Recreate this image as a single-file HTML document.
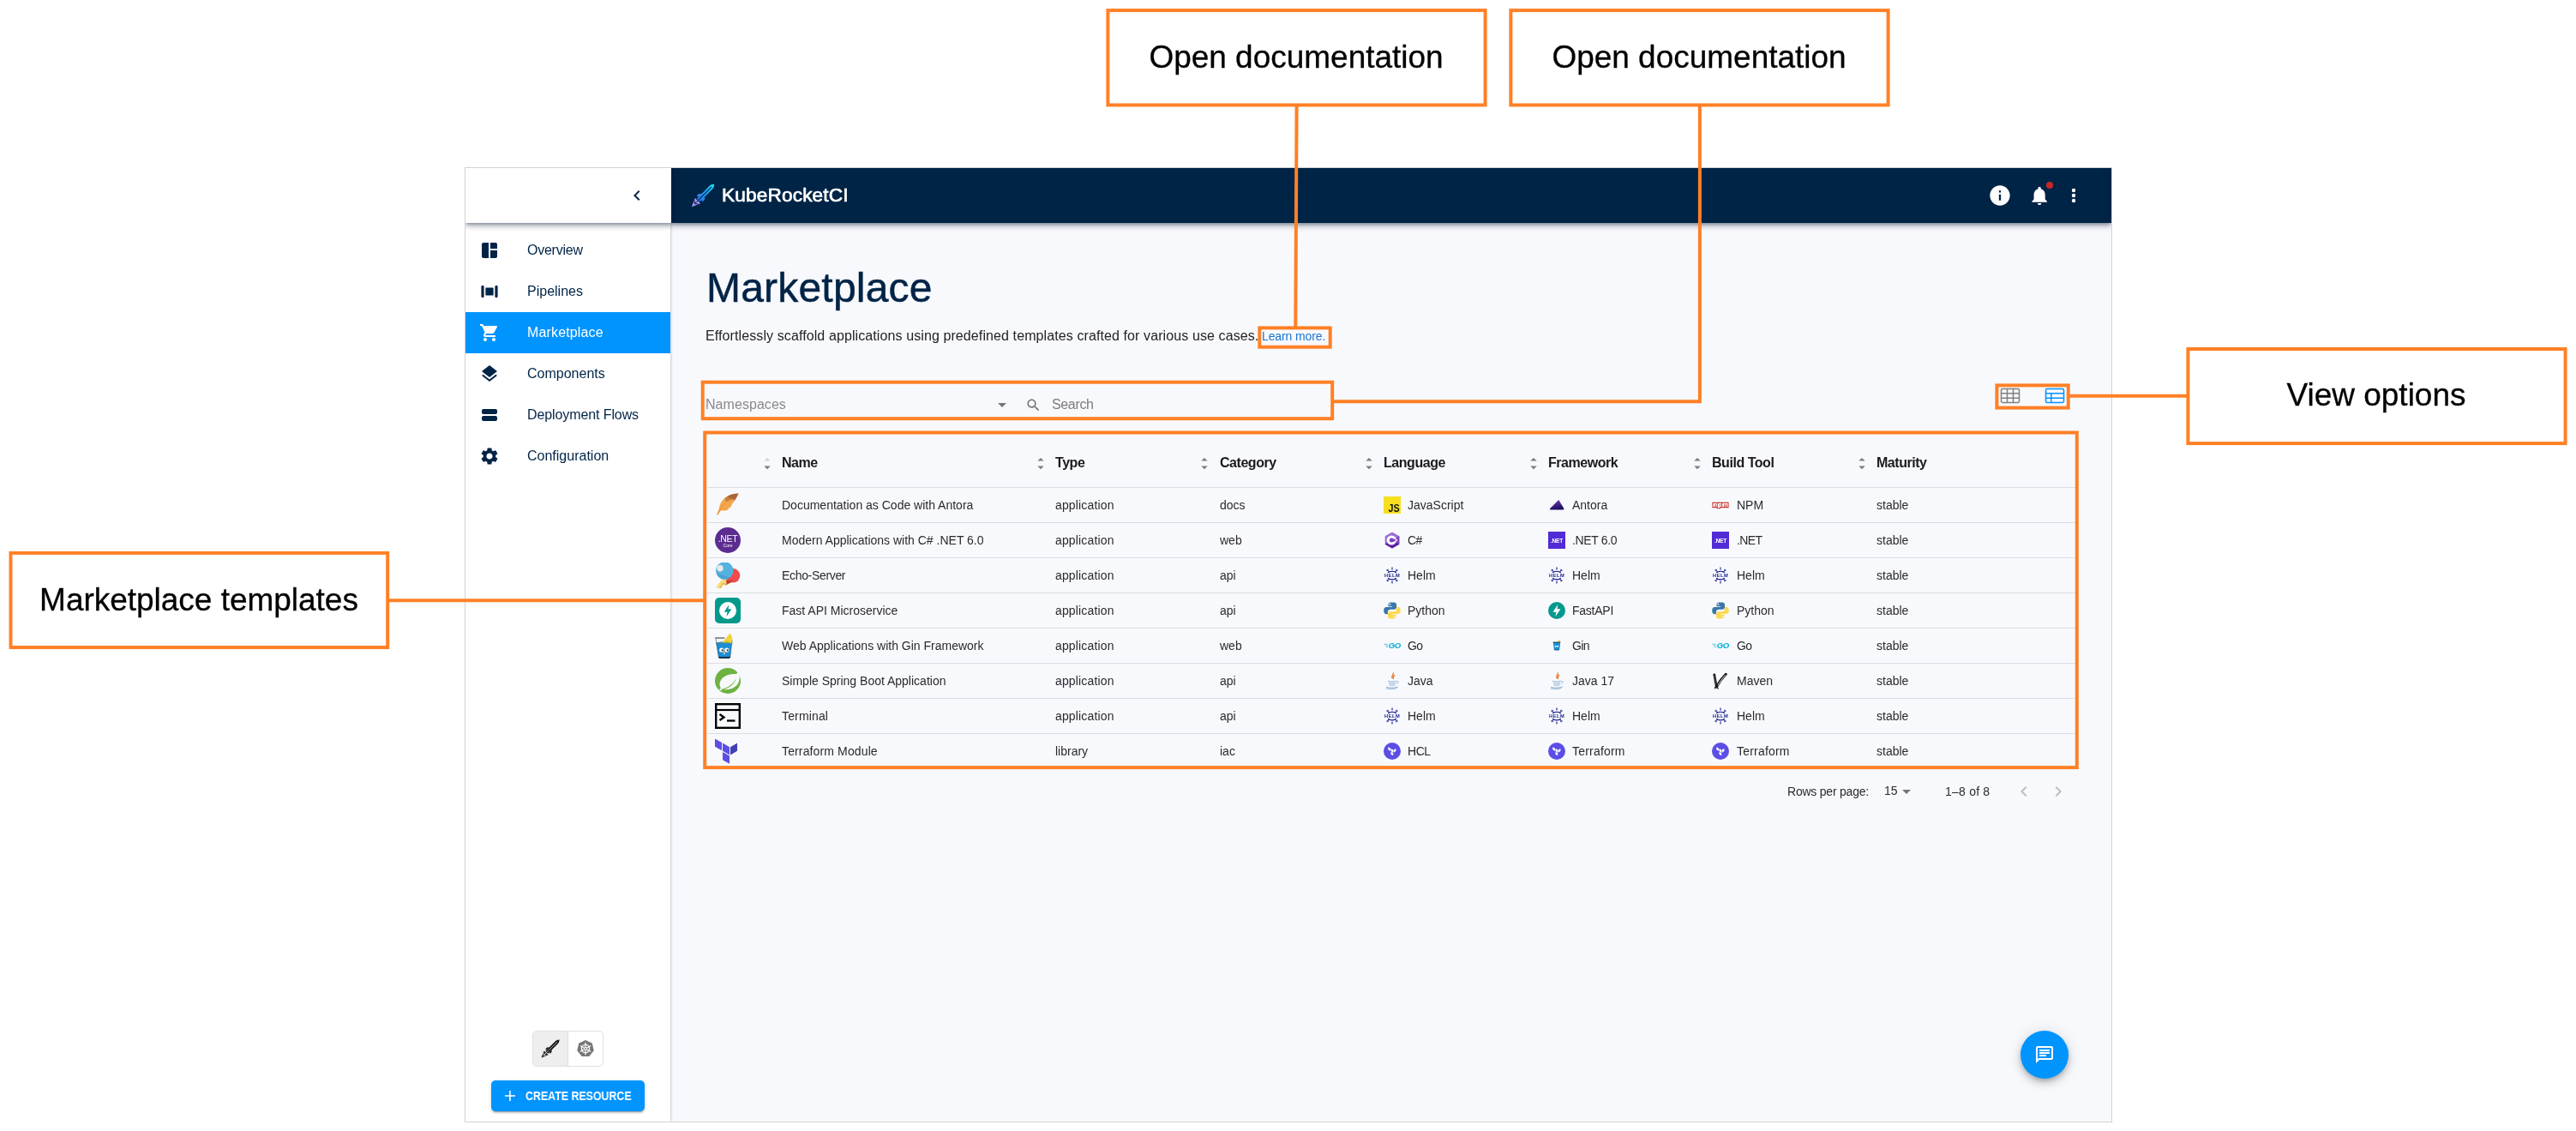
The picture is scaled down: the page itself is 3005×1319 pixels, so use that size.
<!DOCTYPE html>
<html lang="en">
<head>
<meta charset="utf-8">
<title>Marketplace</title>
<style>
html,body{margin:0;padding:0;}
body{width:3005px;height:1319px;position:relative;overflow:hidden;background:#fff;font-family:"Liberation Sans",sans-serif;color:#1c1c1c;}
.abs{position:absolute;}
.t{position:absolute;white-space:nowrap;line-height:1;}
.t,.cell,.hcell,.lbl,svg.abs{will-change:transform;}
#frame{position:absolute;left:542px;top:195px;width:1920px;height:1112px;border:1px solid #d2d2d2;background:#f8f9fd;}
#sidebar{position:absolute;left:543px;top:196px;width:239px;height:1112px;background:#fff;box-shadow:0.500px 0 2.500px rgba(10,20,60,.2);}
#sidehead{position:absolute;left:543px;top:196px;width:240px;height:64px;background:#fff;box-shadow:0 2px 4px -1px rgba(0,18,45,.38),0 4px 6px 0 rgba(0,18,45,.2),0 1px 11px 0 rgba(0,18,45,.14);}
#apphead{position:absolute;left:783px;top:196px;width:1680px;height:64px;background:#002446;box-shadow:0 2px 4px -1px rgba(0,18,45,.38),0 4px 6px 0 rgba(0,18,45,.2),0 1px 11px 0 rgba(0,18,45,.14);}
#clip{position:absolute;left:543px;top:196px;width:1920px;height:1112px;overflow:hidden;}
#clip>.in{position:absolute;left:-543px;top:-196px;width:3005px;height:1319px;}
.nav{position:absolute;left:543px;width:239px;height:48px;}
.nav.active{background:#0094ff;}
.nav .lbl{position:absolute;left:71.800px;top:16px;font-size:16px;line-height:16px;color:#002446;white-space:nowrap;}
.nav.active .lbl{color:#fff;}
.nav svg{position:absolute;left:16px;top:12px;width:24px;height:24px;fill:#002446;}
.nav.active svg{fill:#fff;}
.rowline{position:absolute;left:825px;width:1596px;height:1px;background:#dcdde2;}
.cell{position:absolute;white-space:nowrap;font-size:14px;line-height:14px;color:#2a2a2e;}
.hcell{position:absolute;white-space:nowrap;font-size:16px;line-height:16px;font-weight:700;color:#1a1a1e;letter-spacing:-0.460px;}
.ann{position:absolute;box-sizing:border-box;border:4px solid #ff8026;background:#fff;width:444px;height:114px;}
.ann span{position:absolute;left:0;right:0;text-align:center;font-size:36.8px;line-height:38px;color:#000;top:34px;white-space:nowrap;}
.annt{text-align:center;font-size:37px;line-height:37px;color:#000;letter-spacing:-0.020px;-webkit-text-stroke:0.300px #000;}
</style>
</head>
<body>
<div id="frame"></div>
<div id="clip"><div class="in">
<!-- MAIN -->
<div class="t" style="left:824px;top:312px;font-size:48px;line-height:48px;color:#002446;letter-spacing:0.200px;-webkit-text-stroke:0.500px #002446;">Marketplace</div>
<div class="t" style="left:823.300px;top:383.900px;font-size:16px;line-height:16px;color:#232326;letter-spacing:0.100px;">Effortlessly scaffold applications using predefined templates crafted for various use cases.</div>
<div class="t" style="left:1472.300px;top:385.200px;font-size:14px;line-height:14px;color:#1976d2;letter-spacing:-0.120px;">Learn more.</div>
<div class="t" style="left:823.200px;top:463.700px;font-size:16px;line-height:16px;color:#8a8a8d;letter-spacing:0.050px;">Namespaces</div>
<svg class="abs" style="left:1157px;top:460px;width:24px;height:24px" viewBox="0 0 24 24"><path d="M7 10l5 5 5-5z" fill="#757575"/></svg>
<svg class="abs" style="left:1196px;top:462.500px;width:19px;height:19px" viewBox="0 0 24 24"><path d="M15.500 14h-.79l-.28-.27C15.410 12.590 16 11.110 16 9.500 16 5.910 13.090 3 9.500 3S3 5.910 3 9.500 5.910 16 9.500 16c1.610 0 3.090-.59 4.230-1.570l.27.28v.79l5 4.990L20.490 19l-4.990-5zm-6 0C7.010 14 5 11.990 5 9.500S7.010 5 9.500 5 14 7.010 14 9.500 11.990 14 9.500 14z" fill="#757575"/></svg>
<div class="t" style="left:1226.500px;top:463.700px;font-size:16px;line-height:16px;color:#7a7a7d;letter-spacing:-0.350px;">Search</div>
<svg class="abs" style="left:2333px;top:452px;width:24px;height:19px" viewBox="0 0 24 19"><g fill="none" stroke="#808080" stroke-width="1.500"><rect x="1.500" y="1.500" width="21" height="16" rx="1.400"/><path d="M8.500 1.500v16M15.500 1.500v16M1.500 6.800h21M1.500 12.200h21"/></g></svg>
<svg class="abs" style="left:2385px;top:452px;width:24px;height:19px" viewBox="0 0 24 19"><g fill="none" stroke="#0094ff" stroke-width="1.500"><rect x="1.500" y="1.500" width="21" height="16" rx="1.400"/><path d="M7.800 6.800v10.700M1.500 6.800h21M1.500 12.200h21"/></g></svg>
<div class="hcell" style="left:912.0px;top:532px;">Name</div>
<svg class="abs" style="left:889.6px;top:531.500px;width:10px;height:17px" viewBox="0 0 10 17"><path d="M5 2L8.750 5.500H1.250z" fill="#d6d6da"/><path d="M5 15.300L8.750 11.500H1.250z" fill="#7c7c80"/></svg>
<div class="hcell" style="left:1231.2px;top:532px;">Type</div>
<svg class="abs" style="left:1208.8px;top:531.500px;width:10px;height:17px" viewBox="0 0 10 17"><path d="M5 2L8.750 5.500H1.250z" fill="#7c7c80"/><path d="M5 15.300L8.750 11.500H1.250z" fill="#7c7c80"/></svg>
<div class="hcell" style="left:1422.6px;top:532px;">Category</div>
<svg class="abs" style="left:1400.2px;top:531.500px;width:10px;height:17px" viewBox="0 0 10 17"><path d="M5 2L8.750 5.500H1.250z" fill="#7c7c80"/><path d="M5 15.300L8.750 11.500H1.250z" fill="#7c7c80"/></svg>
<div class="hcell" style="left:1614px;top:532px;">Language</div>
<svg class="abs" style="left:1591.6px;top:531.500px;width:10px;height:17px" viewBox="0 0 10 17"><path d="M5 2L8.750 5.500H1.250z" fill="#7c7c80"/><path d="M5 15.300L8.750 11.500H1.250z" fill="#7c7c80"/></svg>
<div class="hcell" style="left:1806px;top:532px;">Framework</div>
<svg class="abs" style="left:1783.6px;top:531.500px;width:10px;height:17px" viewBox="0 0 10 17"><path d="M5 2L8.750 5.500H1.250z" fill="#7c7c80"/><path d="M5 15.300L8.750 11.500H1.250z" fill="#7c7c80"/></svg>
<div class="hcell" style="left:1997.3px;top:532px;">Build Tool</div>
<svg class="abs" style="left:1974.9px;top:531.500px;width:10px;height:17px" viewBox="0 0 10 17"><path d="M5 2L8.750 5.500H1.250z" fill="#7c7c80"/><path d="M5 15.300L8.750 11.500H1.250z" fill="#7c7c80"/></svg>
<div class="hcell" style="left:2189.3px;top:532px;">Maturity</div>
<svg class="abs" style="left:2166.9px;top:531.500px;width:10px;height:17px" viewBox="0 0 10 17"><path d="M5 2L8.750 5.500H1.250z" fill="#7c7c80"/><path d="M5 15.300L8.750 11.500H1.250z" fill="#7c7c80"/></svg>
<div class="rowline" style="top:568.0px"></div>
<div class="rowline" style="top:609.0px"></div>
<div class="rowline" style="top:650.0px"></div>
<div class="rowline" style="top:691.0px"></div>
<div class="rowline" style="top:732.0px"></div>
<div class="rowline" style="top:773.0px"></div>
<div class="rowline" style="top:814.0px"></div>
<div class="rowline" style="top:855.0px"></div>
<svg class="abs" style="left:834px;top:573.5px;width:30px;height:30px" viewBox="0 0 30 30"><path d="M27.500 1.500C18 1.500 8.500 6 5.500 16c-1 3.500-1.500 6.500-3.300 10.200l1 .600C5 23.500 6.500 22 8 21c2.500 1.200 5.500.500 7.500-1 .300-1.500 1.800-2 3-2.700 1.300-1.600 1-3.300 2.500-4.800 2.500-2.800 4.500-6.500 6.500-11z" fill="#f3a64d"/><path d="M27.500 1.500c-4.500 0-9 1-12.800 3.200l3.300 4.300 4-1.300.5 2.300c2-2.500 3.700-5.500 5-8.500z" fill="#a8653a"/><path d="M14.700 4.700l3.300 4.300-4.500 2.500-2.300-3.800c1-1.200 2.200-2.200 3.500-3z" fill="#c57f45"/><path d="M3 26.500C6 19 11 12 20 6" stroke="#d98b3a" stroke-width="0.800" fill="none"/></svg>
<div class="cell" style="left:912.0px;top:581.80px;">Documentation as Code with Antora</div>
<div class="cell" style="left:1231.2px;top:581.80px;letter-spacing:0.150px;">application</div>
<div class="cell" style="left:1422.6px;top:581.80px;">docs</div>
<svg class="abs" style="left:1614px;top:578.5px;width:20px;height:20px" viewBox="0 0 20 20"><rect width="20" height="20" fill="#f7df1e"/><g transform="translate(12.200 18) scale(0.830 1)"><text x="0" y="0" font-family="Liberation Sans, sans-serif" font-size="13" font-weight="700" fill="#111" text-anchor="middle">JS</text></g></svg>
<div class="cell" style="left:1642.3px;top:581.80px;">JavaScript</div>
<svg class="abs" style="left:1806px;top:578.5px;width:20px;height:20px" viewBox="0 0 20 20"><defs><linearGradient id="ag" x1="0" y1="0" x2="0.300" y2="1"><stop offset="0" stop-color="#7a3fc0"/><stop offset="1" stop-color="#1d0e5e"/></linearGradient></defs><path d="M12.300 4l6 10c.4.700 0 1.500-.9 1.500H2.800c-.9 0-1.200-.8-.6-1.500z" fill="url(#ag)"/></svg>
<div class="cell" style="left:1834.3px;top:581.80px;">Antora</div>
<svg class="abs" style="left:1997.3px;top:578.5px;width:20px;height:20px" viewBox="0 0 20 20"><path d="M0.400 6.800h19.200v6.400H10v1.100H5.700v-1.100H0.400z" fill="#cb3837"/><path d="M1.500 7.900v4.200h2.100V9h1.100v3.100h1.100V7.900zM6.800 7.900v5.300H9v-1.100h2.100V7.900zm2.200 1.100h1v2.100H9zM12.200 7.900v4.200h2.100V9h1.100v3.100h1.100V9h1v3.100h1.100V7.900z" fill="#fff"/></svg>
<div class="cell" style="left:2025.6px;top:581.80px;">NPM</div>
<div class="cell" style="left:2189.3px;top:581.80px;">stable</div>
<svg class="abs" style="left:834px;top:614.5px;width:30px;height:30px" viewBox="0 0 30 30"><circle cx="15" cy="15" r="15" fill="#5c2d91"/><text x="15" y="17" font-family="Liberation Sans, sans-serif" font-size="10.500" fill="#fff" text-anchor="middle" letter-spacing="-0.300">.NET</text><text x="15" y="23.300" font-family="Liberation Sans, sans-serif" font-size="5" fill="#fff" text-anchor="middle">Core</text></svg>
<div class="cell" style="left:912.0px;top:622.80px;">Modern Applications with C# .NET 6.0</div>
<div class="cell" style="left:1231.2px;top:622.80px;letter-spacing:0.150px;">application</div>
<div class="cell" style="left:1422.6px;top:622.80px;">web</div>
<svg class="abs" style="left:1614px;top:619.5px;width:20px;height:20px" viewBox="0 0 20 20"><path d="M10 0.500l8.300 4.750v9.500L10 19.500l-8.300-4.750v-9.500z" fill="#9b6fd6"/><path d="M1.700 14.750L10 19.500l8.300-4.750L10 10z" fill="#5a1fa3"/><path d="M18.300 5.250v9.500L10 10z" fill="#7a3fc0"/><circle cx="9.300" cy="10" r="5.600" fill="#fff"/><circle cx="9.300" cy="10" r="2.500" fill="#7a3fc0"/><path d="M11 8.200l7 1.800-7 1.800z" fill="#7a3fc0"/><path d="M14.300 8.600v2.800M15.600 8.600v2.800M13.600 9.500h2.700M13.600 10.500h2.700" stroke="#fff" stroke-width="0.500"/></svg>
<div class="cell" style="left:1642.3px;top:622.80px;letter-spacing:-0.500px;">C#</div>
<svg class="abs" style="left:1806px;top:619.5px;width:20px;height:20px" viewBox="0 0 20 20"><rect width="20" height="20" fill="#512bd4"/><text x="10" y="12.500" font-family="Liberation Sans, sans-serif" font-size="6.600" font-weight="700" fill="#fff" text-anchor="middle" letter-spacing="-0.200">.NET</text></svg>
<div class="cell" style="left:1834.3px;top:622.80px;letter-spacing:-0.350px;">.NET 6.0</div>
<svg class="abs" style="left:1997.3px;top:619.5px;width:20px;height:20px" viewBox="0 0 20 20"><rect width="20" height="20" fill="#512bd4"/><text x="10" y="12.500" font-family="Liberation Sans, sans-serif" font-size="6.600" font-weight="700" fill="#fff" text-anchor="middle" letter-spacing="-0.200">.NET</text></svg>
<div class="cell" style="left:2025.6px;top:622.80px;letter-spacing:-0.600px;">.NET</div>
<div class="cell" style="left:2189.3px;top:622.80px;">stable</div>
<svg class="abs" style="left:834px;top:655.5px;width:30px;height:30px" viewBox="0 0 30 30"><circle cx="21" cy="15.300" r="8.300" fill="#ef4b4b"/><path d="M10 17.500l8 6-4.500 3.300-3.800-1.600-3 4.500c-1 1.300-2.600 1.400-3.700.400-1-.900-1.100-2.400-.200-3.500z" fill="#f7dc7d"/><path d="M18 23.500l-4.500 3.300-3.800-1.600-3 4.500c-1 1.300-2.600 1.400-3.700.400l-.3-.4c1.100.7 2.400.4 3.200-.6l3.400-5.300 4.200 1.500 3.500-2.600z" fill="#e7a63c"/><path d="M13 19.500c2.500 1.500 5.500 2 8 1.200l-3 3-4.500 1.500z" fill="#c53a3a"/><circle cx="11.300" cy="9.500" r="10.200" fill="#55b1e0"/><path d="M1.500 12.500c1.500 4 5 7.200 9.800 7.200 2.500 0 4.700-.8 6.400-2.200l-7-2.500z" fill="#3f97cc" opacity=".55"/><circle cx="6" cy="6.800" r="3.700" fill="#e9e9e9"/></svg>
<div class="cell" style="left:912.0px;top:663.80px;letter-spacing:-0.330px;">Echo-Server</div>
<div class="cell" style="left:1231.2px;top:663.80px;letter-spacing:0.150px;">application</div>
<div class="cell" style="left:1422.6px;top:663.80px;">api</div>
<svg class="abs" style="left:1614px;top:660.5px;width:20px;height:20px" viewBox="0 0 20 20"><path d="M10 0.600v2.900" transform="rotate(0 10 10)" stroke="#0f1689" stroke-width="1.100"/><path d="M10 0.600v2.900" transform="rotate(180 10 10)" stroke="#0f1689" stroke-width="1.100"/><path d="M10 2.400v2.700M8.900 1.200L10 2.500L11.100 1.200" transform="rotate(-41 10 10)" stroke="#0f1689" stroke-width="0.950" fill="none"/><path d="M10 2.400v2.700M8.900 1.200L10 2.500L11.100 1.200" transform="rotate(41 10 10)" stroke="#0f1689" stroke-width="0.950" fill="none"/><path d="M10 2.400v2.700M8.900 1.200L10 2.500L11.100 1.200" transform="rotate(139 10 10)" stroke="#0f1689" stroke-width="0.950" fill="none"/><path d="M10 2.400v2.700M8.900 1.200L10 2.500L11.100 1.200" transform="rotate(221 10 10)" stroke="#0f1689" stroke-width="0.950" fill="none"/><path d="M5 6.900c2.800-2.300 7.200-2.300 10 0" stroke="#0f1689" stroke-width="1.100" fill="none"/><path d="M5 13.100c2.800 2.300 7.200 2.300 10 0" stroke="#0f1689" stroke-width="1.100" fill="none"/><text x="10.200" y="12.050" font-family="Liberation Sans, sans-serif" font-size="5.700" font-weight="700" fill="#0f1689" text-anchor="middle" letter-spacing="0.550">HELM</text></svg>
<div class="cell" style="left:1642.3px;top:663.80px;">Helm</div>
<svg class="abs" style="left:1806px;top:660.5px;width:20px;height:20px" viewBox="0 0 20 20"><path d="M10 0.600v2.900" transform="rotate(0 10 10)" stroke="#0f1689" stroke-width="1.100"/><path d="M10 0.600v2.900" transform="rotate(180 10 10)" stroke="#0f1689" stroke-width="1.100"/><path d="M10 2.400v2.700M8.900 1.200L10 2.500L11.100 1.200" transform="rotate(-41 10 10)" stroke="#0f1689" stroke-width="0.950" fill="none"/><path d="M10 2.400v2.700M8.900 1.200L10 2.500L11.100 1.200" transform="rotate(41 10 10)" stroke="#0f1689" stroke-width="0.950" fill="none"/><path d="M10 2.400v2.700M8.900 1.200L10 2.500L11.100 1.200" transform="rotate(139 10 10)" stroke="#0f1689" stroke-width="0.950" fill="none"/><path d="M10 2.400v2.700M8.900 1.200L10 2.500L11.100 1.200" transform="rotate(221 10 10)" stroke="#0f1689" stroke-width="0.950" fill="none"/><path d="M5 6.900c2.800-2.300 7.200-2.300 10 0" stroke="#0f1689" stroke-width="1.100" fill="none"/><path d="M5 13.100c2.800 2.300 7.200 2.300 10 0" stroke="#0f1689" stroke-width="1.100" fill="none"/><text x="10.200" y="12.050" font-family="Liberation Sans, sans-serif" font-size="5.700" font-weight="700" fill="#0f1689" text-anchor="middle" letter-spacing="0.550">HELM</text></svg>
<div class="cell" style="left:1834.3px;top:663.80px;">Helm</div>
<svg class="abs" style="left:1997.3px;top:660.5px;width:20px;height:20px" viewBox="0 0 20 20"><path d="M10 0.600v2.900" transform="rotate(0 10 10)" stroke="#0f1689" stroke-width="1.100"/><path d="M10 0.600v2.900" transform="rotate(180 10 10)" stroke="#0f1689" stroke-width="1.100"/><path d="M10 2.400v2.700M8.900 1.200L10 2.500L11.100 1.200" transform="rotate(-41 10 10)" stroke="#0f1689" stroke-width="0.950" fill="none"/><path d="M10 2.400v2.700M8.900 1.200L10 2.500L11.100 1.200" transform="rotate(41 10 10)" stroke="#0f1689" stroke-width="0.950" fill="none"/><path d="M10 2.400v2.700M8.900 1.200L10 2.500L11.100 1.200" transform="rotate(139 10 10)" stroke="#0f1689" stroke-width="0.950" fill="none"/><path d="M10 2.400v2.700M8.900 1.200L10 2.500L11.100 1.200" transform="rotate(221 10 10)" stroke="#0f1689" stroke-width="0.950" fill="none"/><path d="M5 6.900c2.800-2.300 7.200-2.300 10 0" stroke="#0f1689" stroke-width="1.100" fill="none"/><path d="M5 13.100c2.800 2.300 7.200 2.300 10 0" stroke="#0f1689" stroke-width="1.100" fill="none"/><text x="10.200" y="12.050" font-family="Liberation Sans, sans-serif" font-size="5.700" font-weight="700" fill="#0f1689" text-anchor="middle" letter-spacing="0.550">HELM</text></svg>
<div class="cell" style="left:2025.6px;top:663.80px;">Helm</div>
<div class="cell" style="left:2189.3px;top:663.80px;">stable</div>
<svg class="abs" style="left:834px;top:696.5px;width:30px;height:30px" viewBox="0 0 30 30"><rect width="30" height="30" rx="5" fill="#05998b"/><circle cx="15" cy="15" r="10" fill="#fff"/><path d="M16.300 8l-5.500 8.700h3.700l-1 5.500 5.800-8.900h-3.800z" fill="#05998b"/></svg>
<div class="cell" style="left:912.0px;top:704.80px;">Fast API Microservice</div>
<div class="cell" style="left:1231.2px;top:704.80px;letter-spacing:0.150px;">application</div>
<div class="cell" style="left:1422.6px;top:704.80px;">api</div>
<svg class="abs" style="left:1614px;top:701.5px;width:20px;height:20px" viewBox="0 0 20 20"><path d="M9.900 0.500c-2.600 0-4.400.6-4.400 2.400v2.300h4.600v.7H3.300C1.400 5.900.2 7.400.2 10c0 2.700 1.100 4.200 3 4.200h1.700v-2.400c0-1.800 1.500-3.100 3.200-3.100h4.300c1.500 0 2.600-1.200 2.600-2.700V2.900c0-1.500-1.300-2.400-2.700-2.400z" fill="#3a76a8"/><circle cx="7.400" cy="2.700" r=".9" fill="#fff"/><path d="M10.100 19.500c2.600 0 4.400-.6 4.400-2.400v-2.300H9.900v-.7h6.800c1.900 0 3.100-1.500 3.100-4.100 0-2.700-1.100-4.200-3-4.200h-1.700v2.400c0 1.800-1.500 3.100-3.200 3.100H7.600c-1.500 0-2.600 1.200-2.600 2.700v3.100c0 1.500 1.300 2.400 2.700 2.400z" fill="#fbd94f"/><circle cx="12.600" cy="17.300" r=".9" fill="#fff"/></svg>
<div class="cell" style="left:1642.3px;top:704.80px;">Python</div>
<svg class="abs" style="left:1806px;top:701.5px;width:20px;height:20px" viewBox="0 0 20 20"><circle cx="10" cy="10" r="10" fill="#05998b"/><path d="M11.300 3l-5.800 8.700h3.900l-1 5.300 6.100-8.800h-4z" fill="#fff"/></svg>
<div class="cell" style="left:1834.3px;top:704.80px;letter-spacing:-0.250px;">FastAPI</div>
<svg class="abs" style="left:1997.3px;top:701.5px;width:20px;height:20px" viewBox="0 0 20 20"><path d="M9.900 0.500c-2.600 0-4.400.6-4.400 2.400v2.300h4.600v.7H3.300C1.400 5.900.2 7.400.2 10c0 2.700 1.100 4.200 3 4.200h1.700v-2.400c0-1.800 1.500-3.100 3.200-3.100h4.300c1.500 0 2.600-1.200 2.600-2.700V2.900c0-1.500-1.300-2.400-2.700-2.400z" fill="#3a76a8"/><circle cx="7.400" cy="2.700" r=".9" fill="#fff"/><path d="M10.100 19.500c2.600 0 4.400-.6 4.400-2.400v-2.300H9.900v-.7h6.800c1.900 0 3.100-1.500 3.100-4.100 0-2.700-1.100-4.200-3-4.200h-1.700v2.400c0 1.800-1.500 3.100-3.200 3.100H7.600c-1.500 0-2.600 1.200-2.600 2.700v3.100c0 1.500 1.300 2.400 2.700 2.400z" fill="#fbd94f"/><circle cx="12.600" cy="17.300" r=".9" fill="#fff"/></svg>
<div class="cell" style="left:2025.6px;top:704.80px;">Python</div>
<div class="cell" style="left:2189.3px;top:704.80px;">stable</div>
<svg class="abs" style="left:834px;top:737.5px;width:30px;height:30px" viewBox="0 0 30 30"><path d="M0.800 6h19.400l-2.400 22.500c-.1.800-.7 1.200-1.500 1.200H5.800c-.8 0-1.400-.4-1.500-1.200z" fill="#eef3f7"/><path d="M1.500 11.500c6-1.300 12-1.300 18 0l-1.700 17c-.1.800-.7 1.200-1.500 1.200H5.800c-.8 0-1.400-.4-1.500-1.200z" fill="#1a8fd6"/><path d="M1.500 11.500c6-1.300 12-1.300 18 0l-.3 2.500c-6-1.200-11.500-1.200-17.400 0z" fill="#3a8a9e" opacity=".6"/><path d="M8.500 11.500l9-11c2.300 2.300 3.300 6 2.700 9.500l-1 1.800c-3.500-.7-7-.8-10.700-.3z" fill="#f5d33a"/><path d="M8.500 11.500l6-2.500 4 2.500c-3.300-.5-6.700-.5-10 0z" fill="#e0b820"/><path d="M0.300 5.600h11v1h-11z" fill="#333"/><path d="M3.800 28l.4.800c.2.600.8.900 1.600.9h10.500c.8 0 1.400-.3 1.500-.9l.3-.8z" fill="#123"/><path d="M0.800 6l3.500 22.500" stroke="#234" stroke-width=".5"/><path d="M20.200 9l-2.400 19.500" stroke="#234" stroke-width=".5"/><circle cx="7.800" cy="20" r="2.600" fill="#fff"/><circle cx="13.800" cy="20" r="2.600" fill="#fff"/><circle cx="8.700" cy="20.300" r="1.100" fill="#222"/><circle cx="14.700" cy="20.300" r="1.100" fill="#222"/><ellipse cx="10.900" cy="22.800" rx="1.500" ry="1" fill="#c79a6a"/><rect x="10.300" y="23.500" width="1.300" height="1.600" fill="#fff"/></svg>
<div class="cell" style="left:912.0px;top:745.80px;">Web Applications with Gin Framework</div>
<div class="cell" style="left:1231.2px;top:745.80px;letter-spacing:0.150px;">application</div>
<div class="cell" style="left:1422.6px;top:745.80px;">web</div>
<svg class="abs" style="left:1614px;top:742.5px;width:20px;height:20px" viewBox="0 0 20 20"><path d="M0.200 8.300h4.600M1.600 9.900h3.400M3 11.500h2" stroke="#3ab6d8" stroke-width="0.700"/><text x="12.800" y="13.300" font-family="Liberation Sans, sans-serif" font-size="9.600" font-weight="700" font-style="italic" fill="#00acd7" text-anchor="middle" letter-spacing="-0.500">GO</text></svg>
<div class="cell" style="left:1642.3px;top:745.80px;letter-spacing:-0.700px;">Go</div>
<svg class="abs" style="left:1806px;top:742.5px;width:20px;height:20px" viewBox="0 0 20 20"><path d="M10.500 6.500l2.300-3.700c1 .9 1.400 2.300 1.100 3.700z" fill="#f5d33a"/><path d="M5.800 6h8.400l-1 8.600c-.1.500-.4.700-.8.700H7.600c-.4 0-.7-.2-.8-.7z" fill="#1a8fd6"/><path d="M5.600 5.600h8.800v.9H5.600z" fill="#234"/><circle cx="8.700" cy="10.800" r="1" fill="#fff"/><circle cx="11.200" cy="10.800" r="1" fill="#fff"/><path d="M7 14.700h6l-.2.600H7.200z" fill="#123"/></svg>
<div class="cell" style="left:1834.3px;top:745.80px;letter-spacing:-0.600px;">Gin</div>
<svg class="abs" style="left:1997.3px;top:742.5px;width:20px;height:20px" viewBox="0 0 20 20"><path d="M0.200 8.300h4.600M1.600 9.900h3.400M3 11.500h2" stroke="#3ab6d8" stroke-width="0.700"/><text x="12.800" y="13.300" font-family="Liberation Sans, sans-serif" font-size="9.600" font-weight="700" font-style="italic" fill="#00acd7" text-anchor="middle" letter-spacing="-0.500">GO</text></svg>
<div class="cell" style="left:2025.6px;top:745.80px;letter-spacing:-0.700px;">Go</div>
<div class="cell" style="left:2189.3px;top:745.80px;">stable</div>
<svg class="abs" style="left:834px;top:778.5px;width:30px;height:30px" viewBox="0 0 30 30"><circle cx="15" cy="15" r="15" fill="#6db33f"/><path d="M27.500 3c-.6 1.500-1.500 2.900-2.500 4C13 6 5.500 12.500 5.500 19c0 2 .8 4 2 5.200l.7.600c7.500 1.800 19-1 20.500-12 .5-3.500-.2-7-1.200-9.800z" fill="#f8f9fd"/><path d="M8.500 24.500c5-1 12-4.500 16.500-12.500-2.500 7.500-9 12-16 13.500z" fill="#6db33f"/><circle cx="6.700" cy="25" r="1.300" fill="#f8f9fd"/></svg>
<div class="cell" style="left:912.0px;top:786.80px;">Simple Spring Boot Application</div>
<div class="cell" style="left:1231.2px;top:786.80px;letter-spacing:0.150px;">application</div>
<div class="cell" style="left:1422.6px;top:786.80px;">api</div>
<svg class="abs" style="left:1614px;top:783.5px;width:20px;height:20px" viewBox="0 0 20 20"><path d="M11 0.500c1.900 2.100-2.800 3.400-1 6.500M13.200 3.200c-3.400 1.700-1.500 3.300-1.900 5" stroke="#ea6a1a" stroke-width="1.250" fill="none"/><path d="M5 10.300c3 .9 7 .9 10 0M6 12.600c2.500.7 5.500.7 8 0M6.500 14.800c2.300.6 4.700.6 7 0M3 17.200c4.300 1.300 9.700 1.300 14-.3M2.800 18.900c4 .8 9 .8 12.500-.3" stroke="#5a8dbb" stroke-width="0.650" fill="none"/><path d="M15.300 10.600c2.400-.7 2.600 1.800-.4 3" stroke="#5a8dbb" stroke-width="0.600" fill="none"/></svg>
<div class="cell" style="left:1642.3px;top:786.80px;">Java</div>
<svg class="abs" style="left:1806px;top:783.5px;width:20px;height:20px" viewBox="0 0 20 20"><path d="M11 0.500c1.900 2.100-2.800 3.400-1 6.500M13.200 3.200c-3.400 1.700-1.500 3.300-1.900 5" stroke="#ea6a1a" stroke-width="1.250" fill="none"/><path d="M5 10.300c3 .9 7 .9 10 0M6 12.600c2.500.7 5.500.7 8 0M6.500 14.800c2.300.6 4.700.6 7 0M3 17.200c4.300 1.300 9.700 1.300 14-.3M2.800 18.900c4 .8 9 .8 12.500-.3" stroke="#5a8dbb" stroke-width="0.650" fill="none"/><path d="M15.300 10.600c2.400-.7 2.600 1.800-.4 3" stroke="#5a8dbb" stroke-width="0.600" fill="none"/></svg>
<div class="cell" style="left:1834.3px;top:786.80px;">Java 17</div>
<svg class="abs" style="left:1997.3px;top:783.5px;width:20px;height:20px" viewBox="0 0 20 20"><path d="M2.800 2.800c.8 4.500 1.500 8.500 2.400 13" stroke="#111" stroke-width="2.700" fill="none" stroke-linecap="round"/><path d="M16.300 2.300C12.300 6.300 8.800 11 5.800 16.300" stroke="#111" stroke-width="3" fill="none" stroke-linecap="round"/><path d="M15.800 3.200C12.300 7 9.300 11.300 6.800 15.300" stroke="#f8f9fd" stroke-width="0.900" fill="none"/><path d="M3 3.500c.7 3.800 1.400 7.500 2.100 11" stroke="#777" stroke-width="0.600" fill="none"/><path d="M3.300 19.600l2.200-4.500 1.800 4.300M3 17.300l4.500 1.500" stroke="#111" stroke-width="1" fill="none"/></svg>
<div class="cell" style="left:2025.6px;top:786.80px;">Maven</div>
<div class="cell" style="left:2189.3px;top:786.80px;">stable</div>
<svg class="abs" style="left:834px;top:819.5px;width:30px;height:30px" viewBox="0 0 30 30"><rect x="1.200" y="1.200" width="27.600" height="27.600" fill="#f8f9fd" stroke="#000" stroke-width="2.400"/><path d="M1 8h28" stroke="#000" stroke-width="2.200"/><rect x="3.500" y="3.400" width="2.600" height="2.400" fill="#f8f9fd"/><path d="M5.500 13l5 3.500-5 3.500" stroke="#000" stroke-width="2.300" fill="none"/><path d="M14 20.500h9.500" stroke="#000" stroke-width="2.300"/></svg>
<div class="cell" style="left:912.0px;top:827.80px;letter-spacing:0.150px;">Terminal</div>
<div class="cell" style="left:1231.2px;top:827.80px;letter-spacing:0.150px;">application</div>
<div class="cell" style="left:1422.6px;top:827.80px;">api</div>
<svg class="abs" style="left:1614px;top:824.5px;width:20px;height:20px" viewBox="0 0 20 20"><path d="M10 0.600v2.900" transform="rotate(0 10 10)" stroke="#0f1689" stroke-width="1.100"/><path d="M10 0.600v2.900" transform="rotate(180 10 10)" stroke="#0f1689" stroke-width="1.100"/><path d="M10 2.400v2.700M8.900 1.200L10 2.500L11.100 1.200" transform="rotate(-41 10 10)" stroke="#0f1689" stroke-width="0.950" fill="none"/><path d="M10 2.400v2.700M8.900 1.200L10 2.500L11.100 1.200" transform="rotate(41 10 10)" stroke="#0f1689" stroke-width="0.950" fill="none"/><path d="M10 2.400v2.700M8.900 1.200L10 2.500L11.100 1.200" transform="rotate(139 10 10)" stroke="#0f1689" stroke-width="0.950" fill="none"/><path d="M10 2.400v2.700M8.900 1.200L10 2.500L11.100 1.200" transform="rotate(221 10 10)" stroke="#0f1689" stroke-width="0.950" fill="none"/><path d="M5 6.900c2.800-2.300 7.200-2.300 10 0" stroke="#0f1689" stroke-width="1.100" fill="none"/><path d="M5 13.100c2.800 2.300 7.200 2.300 10 0" stroke="#0f1689" stroke-width="1.100" fill="none"/><text x="10.200" y="12.050" font-family="Liberation Sans, sans-serif" font-size="5.700" font-weight="700" fill="#0f1689" text-anchor="middle" letter-spacing="0.550">HELM</text></svg>
<div class="cell" style="left:1642.3px;top:827.80px;">Helm</div>
<svg class="abs" style="left:1806px;top:824.5px;width:20px;height:20px" viewBox="0 0 20 20"><path d="M10 0.600v2.900" transform="rotate(0 10 10)" stroke="#0f1689" stroke-width="1.100"/><path d="M10 0.600v2.900" transform="rotate(180 10 10)" stroke="#0f1689" stroke-width="1.100"/><path d="M10 2.400v2.700M8.900 1.200L10 2.500L11.100 1.200" transform="rotate(-41 10 10)" stroke="#0f1689" stroke-width="0.950" fill="none"/><path d="M10 2.400v2.700M8.900 1.200L10 2.500L11.100 1.200" transform="rotate(41 10 10)" stroke="#0f1689" stroke-width="0.950" fill="none"/><path d="M10 2.400v2.700M8.900 1.200L10 2.500L11.100 1.200" transform="rotate(139 10 10)" stroke="#0f1689" stroke-width="0.950" fill="none"/><path d="M10 2.400v2.700M8.900 1.200L10 2.500L11.100 1.200" transform="rotate(221 10 10)" stroke="#0f1689" stroke-width="0.950" fill="none"/><path d="M5 6.900c2.800-2.300 7.200-2.300 10 0" stroke="#0f1689" stroke-width="1.100" fill="none"/><path d="M5 13.100c2.800 2.300 7.200 2.300 10 0" stroke="#0f1689" stroke-width="1.100" fill="none"/><text x="10.200" y="12.050" font-family="Liberation Sans, sans-serif" font-size="5.700" font-weight="700" fill="#0f1689" text-anchor="middle" letter-spacing="0.550">HELM</text></svg>
<div class="cell" style="left:1834.3px;top:827.80px;">Helm</div>
<svg class="abs" style="left:1997.3px;top:824.5px;width:20px;height:20px" viewBox="0 0 20 20"><path d="M10 0.600v2.900" transform="rotate(0 10 10)" stroke="#0f1689" stroke-width="1.100"/><path d="M10 0.600v2.900" transform="rotate(180 10 10)" stroke="#0f1689" stroke-width="1.100"/><path d="M10 2.400v2.700M8.900 1.200L10 2.500L11.100 1.200" transform="rotate(-41 10 10)" stroke="#0f1689" stroke-width="0.950" fill="none"/><path d="M10 2.400v2.700M8.900 1.200L10 2.500L11.100 1.200" transform="rotate(41 10 10)" stroke="#0f1689" stroke-width="0.950" fill="none"/><path d="M10 2.400v2.700M8.900 1.200L10 2.500L11.100 1.200" transform="rotate(139 10 10)" stroke="#0f1689" stroke-width="0.950" fill="none"/><path d="M10 2.400v2.700M8.900 1.200L10 2.500L11.100 1.200" transform="rotate(221 10 10)" stroke="#0f1689" stroke-width="0.950" fill="none"/><path d="M5 6.900c2.800-2.300 7.200-2.300 10 0" stroke="#0f1689" stroke-width="1.100" fill="none"/><path d="M5 13.100c2.800 2.300 7.200 2.300 10 0" stroke="#0f1689" stroke-width="1.100" fill="none"/><text x="10.200" y="12.050" font-family="Liberation Sans, sans-serif" font-size="5.700" font-weight="700" fill="#0f1689" text-anchor="middle" letter-spacing="0.550">HELM</text></svg>
<div class="cell" style="left:2025.6px;top:827.80px;">Helm</div>
<div class="cell" style="left:2189.3px;top:827.80px;">stable</div>
<svg class="abs" style="left:834px;top:860.5px;width:30px;height:30px" viewBox="0 0 30 30"><path d="M0 0.500l8 4.600v9.200l-8-4.600z" fill="#5c4ee5"/><path d="M9 5.600l8 4.600v9.200l-8-4.600z" fill="#5c4ee5"/><path d="M18 10.200l8-4.600v9.200l-8 4.600z" fill="#4040b2"/><path d="M9 16l8 4.600v9.200l-8-4.600z" fill="#5c4ee5"/></svg>
<div class="cell" style="left:912.0px;top:868.80px;letter-spacing:0.130px;">Terraform Module</div>
<div class="cell" style="left:1231.2px;top:868.80px;">library</div>
<div class="cell" style="left:1422.6px;top:868.80px;">iac</div>
<svg class="abs" style="left:1614px;top:865.5px;width:20px;height:20px" viewBox="0 0 20 20"><circle cx="10" cy="10" r="10" fill="#5c4ee5"/><path d="M5.300 5.200l2.700 1.550v3.100L5.300 8.300z M8.500 7l2.700 1.550v3.100L8.500 10.100z M11.700 8.550l2.700-1.550v3.100l-2.700 1.550z M8.500 10.700l2.700 1.550v3.100L8.500 13.800z" fill="#fff"/></svg>
<div class="cell" style="left:1642.3px;top:868.80px;letter-spacing:-0.450px;">HCL</div>
<svg class="abs" style="left:1806px;top:865.5px;width:20px;height:20px" viewBox="0 0 20 20"><circle cx="10" cy="10" r="10" fill="#5c4ee5"/><path d="M5.300 5.200l2.700 1.550v3.100L5.300 8.300z M8.500 7l2.700 1.550v3.100L8.500 10.100z M11.700 8.550l2.700-1.550v3.100l-2.700 1.550z M8.500 10.700l2.700 1.550v3.100L8.500 13.800z" fill="#fff"/></svg>
<div class="cell" style="left:1834.3px;top:868.80px;letter-spacing:0.200px;">Terraform</div>
<svg class="abs" style="left:1997.3px;top:865.5px;width:20px;height:20px" viewBox="0 0 20 20"><circle cx="10" cy="10" r="10" fill="#5c4ee5"/><path d="M5.300 5.200l2.700 1.550v3.100L5.300 8.300z M8.500 7l2.700 1.550v3.100L8.500 10.100z M11.700 8.550l2.700-1.550v3.100l-2.700 1.550z M8.500 10.700l2.700 1.550v3.100L8.500 13.800z" fill="#fff"/></svg>
<div class="cell" style="left:2025.6px;top:868.80px;letter-spacing:0.200px;">Terraform</div>
<div class="cell" style="left:2189.3px;top:868.80px;">stable</div>
<div class="t" style="left:2085px;top:915.800px;font-size:14px;line-height:14px;color:#2b2b2e;letter-spacing:-0.220px;">Rows per page:</div>
<div class="t" style="left:2197.500px;top:914.800px;font-size:14px;line-height:14px;color:#2b2b2e;">15</div>
<svg class="abs" style="left:2212px;top:911px;width:24px;height:24px" viewBox="0 0 24 24"><path d="M7 10l5 5 5-5z" fill="#757575"/></svg>
<div class="t" style="left:2269px;top:915.800px;font-size:14px;line-height:14px;color:#2b2b2e;letter-spacing:0.220px;">1–8 of 8</div>
<svg class="abs" style="left:2349px;top:910.500px;width:24px;height:24px" viewBox="0 0 24 24"><path d="M15.410 7.410L14 6l-6 6 6 6 1.410-1.410L10.830 12z" fill="#bdbdc2"/></svg>
<svg class="abs" style="left:2389px;top:910.500px;width:24px;height:24px" viewBox="0 0 24 24"><path d="M10 6L8.590 7.410 13.170 12l-4.580 4.590L10 18l6-6z" fill="#bdbdc2"/></svg>
<div class="abs" style="left:2357px;top:1202px;width:56px;height:56px;border-radius:50%;background:#0094ff;box-shadow:0 3px 5px -1px rgba(0,0,0,.2),0 6px 10px 0 rgba(0,0,0,.14),0 1px 18px 0 rgba(0,0,0,.12);"></div>
<svg class="abs" style="left:2373px;top:1218px;width:24px;height:24px" viewBox="0 0 24 24"><path d="M20 2H4c-1.100 0-1.990.9-1.990 2L2 22l4-4h14c1.100 0 2-.9 2-2V4c0-1.100-.9-2-2-2zM4 4h16v12H5.170L4 17.170V4zm2 8h8v2H6zm0-3h12v2H6zm0-3h12v2H6z" fill="#fff"/></svg>
<!-- SIDEBAR -->
<div id="sidebar"></div>
<div class="nav" style="top:268px"><svg viewBox="0 0 24 24"><path d="M11 21H5c-1.1 0-2-.9-2-2V5c0-1.1.9-2 2-2h6v18zm2 0h6c1.1 0 2-.9 2-2v-7h-8v9zm8-11V5c0-1.1-.9-2-2-2h-6v7h8z"/></svg><span class="lbl" style="letter-spacing:-0.250px">Overview</span></div>
<div class="nav" style="top:316px"><svg viewBox="0 0 24 24"><rect x="2.4" y="4.8" width="3.2" height="14.4" rx="1.6"/><rect x="18.4" y="4.8" width="3.2" height="14.4" rx="1.6"/><rect x="7.4" y="7.4" width="9.2" height="9.2" rx="0.6"/></svg><span class="lbl">Pipelines</span></div>
<div class="nav active" style="top:364px"><svg viewBox="0 0 24 24"><path d="M7 18c-1.1 0-1.99.9-1.99 2S5.900 22 7 22s2-.9 2-2-.9-2-2-2zM1 2v2h2l3.600 7.590-1.350 2.450c-.16.28-.25.61-.25.96 0 1.1.9 2 2 2h12v-2H7.420c-.14 0-.25-.11-.25-.25l.03-.12.9-1.630h7.450c.75 0 1.410-.41 1.750-1.030l3.580-6.490c.08-.14.12-.31.12-.48 0-.55-.45-1-1-1H5.210l-.94-2H1zm16 16c-1.1 0-1.990.9-1.990 2s.89 2 1.990 2 2-.9 2-2-.9-2-2-2z"/></svg><span class="lbl" style="letter-spacing:0.150px">Marketplace</span></div>
<div class="nav" style="top:412px"><svg viewBox="0 0 24 24"><path d="M11.990 18.540l-7.370-5.730L3 14.070l9 7 9-7-1.630-1.270-7.380 5.740zM12 16l7.360-5.730L21 9l-9-7-9 7 1.630 1.270L12 16z"/></svg><span class="lbl">Components</span></div>
<div class="nav" style="top:460px"><svg viewBox="0 0 24 24"><path d="M19 13H5c-1.100 0-2 .900-2 2v2c0 1.100.900 2 2 2h14c1.100 0 2-.900 2-2v-2c0-1.100-.900-2-2-2zM19 5H5c-1.100 0-2 .900-2 2v2c0 1.100.900 2 2 2h14c1.100 0 2-.900 2-2V7c0-1.100-.900-2-2-2z"/></svg><span class="lbl" style="letter-spacing:-0.100px">Deployment Flows</span></div>
<div class="nav" style="top:508px"><svg viewBox="0 0 24 24"><path d="M19.140 12.940c.04-.3.06-.61.06-.94 0-.32-.02-.64-.07-.94l2.030-1.580c.18-.14.23-.41.12-.61l-1.920-3.320c-.12-.22-.37-.29-.59-.22l-2.390.96c-.5-.38-1.030-.7-1.620-.94l-.36-2.540c-.04-.24-.24-.41-.48-.41h-3.840c-.24 0-.43.17-.47.41l-.36 2.540c-.59.24-1.130.57-1.620.94l-2.390-.96c-.22-.08-.47 0-.59.22L2.740 8.870c-.12.21-.08.47.12.61l2.030 1.580c-.05.3-.09.63-.09.94s.02.64.07.94l-2.030 1.580c-.18.14-.23.41-.12.61l1.920 3.320c.12.22.37.29.59.22l2.390-.96c.5.38 1.030.7 1.620.94l.36 2.540c.05.24.24.41.48.41h3.840c.24 0 .44-.17.47-.41l.36-2.540c.59-.24 1.130-.56 1.620-.94l2.390.96c.22.08.47 0 .59-.22l1.920-3.320c.12-.22.07-.47-.12-.61l-2.010-1.580zM12 15.600c-1.980 0-3.600-1.620-3.600-3.600s1.620-3.600 3.600-3.600 3.600 1.620 3.600 3.600-1.620 3.600-3.600 3.600z"/></svg><span class="lbl">Configuration</span></div>
<!-- toggle group -->
<div class="abs" style="left:621px;top:1202px;width:83px;height:42px;box-sizing:border-box;border:1px solid #e0e0e0;border-radius:5px;background:#fff;overflow:hidden;"><div class="abs" style="left:0;top:0;width:40px;height:40px;background:#eeeeee;border-right:1px solid #dcdcdc;"></div></div>
<svg class="abs" style="left:626.200px;top:1206.900px;width:32px;height:32px" viewBox="0 0 40 40"><g transform="rotate(45 20 20)"><path d="M20 1.400C22.100 3.300 22.600 5.600 22.600 8V27.500H17.400V8C17.400 5.600 17.900 3.300 20 1.400Z" fill="#1a1a1a"/><path d="M17.400 19.500L15.200 22V25.600L17.400 24.600ZM22.600 19.500L24.800 22V25.600L22.600 24.600Z" fill="#1a1a1a"/><path d="M20 6V27.500" stroke="#ddd" stroke-width="0.800"/><path d="M15.600 28.600H24.400L20 38.600Z" fill="#1a1a1a"/><path d="M20 28.600V34M17.200 31L20 33.600L22.800 31" stroke="#eee" stroke-width="0.900" fill="none"/></g></svg>
<svg class="abs" style="left:672px;top:1212px;width:22px;height:22px" viewBox="0 0 22 22"><polygon points="11,1 18.800,4.800 20.700,13.200 15.300,20 6.700,20 1.300,13.200 3.200,4.800" fill="#757575"/><circle cx="11" cy="11" r="4.600" fill="none" stroke="#fff" stroke-width="1.300"/><g stroke="#fff" stroke-width="1.200"><path d="M11 3.800v14.400M4.800 7.400l12.400 7.200M4.800 14.600l12.400-7.200"/></g><circle cx="11" cy="11" r="1.500" fill="#757575" stroke="#fff" stroke-width="1"/></svg>
<!-- create button -->
<div class="abs" style="left:573px;top:1260px;width:179px;height:36px;border-radius:5px;background:#0094ff;box-shadow:0 3px 1px -2px rgba(0,0,0,.2),0 2px 2px 0 rgba(0,0,0,.14),0 1px 5px 0 rgba(0,0,0,.12);"></div>
<svg class="abs" style="left:589px;top:1272px;width:12px;height:12px" viewBox="0 0 12 12"><path d="M5.200 0h1.600v5.200H12v1.600H6.800V12H5.200V6.800H0V5.200h5.200z" fill="#fff"/></svg>
<span class="t" style="left:612.500px;top:1271px;font-size:14px;line-height:14px;font-weight:700;color:#fff;transform:scaleX(0.884);transform-origin:0 0;">CREATE RESOURCE</span>
<!-- HEADERS -->
<div id="apphead"></div>
<div id="sidehead"></div>
<svg class="abs" style="left:731px;top:216px;width:24px;height:24px" viewBox="0 0 24 24"><path d="M15.410 7.410L14 6l-6 6 6 6 1.410-1.410L10.830 12z" fill="#002446"/></svg>
<!-- logo -->
<svg class="abs" style="left:800px;top:208px;width:40px;height:40px" viewBox="0 0 40 40"><defs><linearGradient id="rg" x1="0" y1="0" x2="0" y2="1"><stop offset="0" stop-color="#16e6f2"/><stop offset="0.550" stop-color="#1a9cf2"/><stop offset="1" stop-color="#2a78ea"/></linearGradient></defs><g transform="rotate(45 20 20)"><path d="M20 1.400C22.100 3.300 22.600 5.600 22.600 8V27.500H17.400V8C17.400 5.600 17.900 3.300 20 1.400Z" fill="url(#rg)"/><path d="M17.400 19.500L15.200 22V25.600L17.400 24.600ZM22.600 19.500L24.800 22V25.600L22.600 24.600Z" fill="#2b8df0"/><path d="M20 6V27.500" stroke="#002446" stroke-width="1.100"/><path d="M15.600 28.600H24.400L20 38.600Z" fill="#a897f7"/><path d="M20 28.600V34M17.200 31L20 33.600L22.800 31" stroke="#002446" stroke-width="0.900" fill="none"/></g></svg>
<span class="t" style="left:842.300px;top:216.900px;font-size:22.600px;line-height:22.600px;font-weight:400;color:#fff;letter-spacing:0.170px;-webkit-text-stroke:0.700px #fff;">KubeRocketCI</span>
<!-- header icons -->
<svg class="abs" style="left:2319px;top:214px;width:28px;height:28px" viewBox="0 0 24 24"><path d="M12 2C6.480 2 2 6.480 2 12s4.480 10 10 10 10-4.480 10-10S17.520 2 12 2zm1 15h-2v-6h2v6zm0-8h-2V7h2v2z" fill="#fff"/></svg>
<svg class="abs" style="left:2365.850px;top:215.300px;width:26.300px;height:26.300px" viewBox="0 0 24 24"><path d="M12 22c1.100 0 2-.9 2-2h-4c0 1.100.89 2 2 2zm6-6v-5c0-3.070-1.640-5.640-4.500-6.320V4c0-.83-.67-1.500-1.500-1.500s-1.500.67-1.500 1.500v.68C7.630 5.360 6 7.920 6 11v5l-2 2v1h16v-1l-2-2z" fill="#fff"/></svg>
<div class="abs" style="left:2387px;top:212px;width:8px;height:8px;border-radius:50%;background:#c62828;"></div>
<svg class="abs" style="left:2407px;top:216px;width:24px;height:24px" viewBox="0 0 24 24"><circle cx="12" cy="6" r="2.200" fill="#fff"/><circle cx="12" cy="12" r="2.200" fill="#fff"/><circle cx="12" cy="18" r="2.200" fill="#fff"/></svg>
</div></div>
<!-- ANNOTATIONS -->
<svg class="abs" style="left:0;top:0;width:3005px;height:1319px" viewBox="0 0 3005 1319"><g stroke="#ff8026" stroke-width="4" fill="none"><path d="M1512.600 122L1511.300 382"/><path d="M1556 468.300H1982.900V122"/><path d="M2414 461.800H2552"/><path d="M452 700.300H822"/></g></svg>
<svg class="abs" style="left:0;top:0;width:3005px;height:1319px" viewBox="0 0 3005 1319"><g stroke="#ff8026" stroke-width="4" fill="none"><rect x="1469.30" y="382.40" width="82.40" height="22.30" fill="none"/><rect x="819.70" y="445.70" width="734.50" height="42.50" fill="none"/><rect x="2329.40" y="449.40" width="83.30" height="26.20" fill="none"/><rect x="822.20" y="504.50" width="1600.60" height="390.60" fill="none"/><rect x="1292.40" y="12.10" width="440.20" height="110.40" fill="#fff"/><rect x="1762.40" y="12.10" width="440.20" height="110.40" fill="#fff"/><rect x="2552.40" y="407.00" width="440.20" height="110.10" fill="#fff"/><rect x="12.50" y="644.90" width="439.70" height="110.10" fill="#fff"/></g></svg>
<div class="t annt" style="left:1211.6px;width:600px;top:48.00px;">Open documentation</div>
<div class="t annt" style="left:1681.6px;width:600px;top:48.00px;">Open documentation</div>
<div class="t annt" style="left:2472.0px;width:600px;top:441.70px;">View options</div>
<div class="t annt" style="left:-67.6px;width:600px;top:681.10px;">Marketplace templates</div>
</body>
</html>
